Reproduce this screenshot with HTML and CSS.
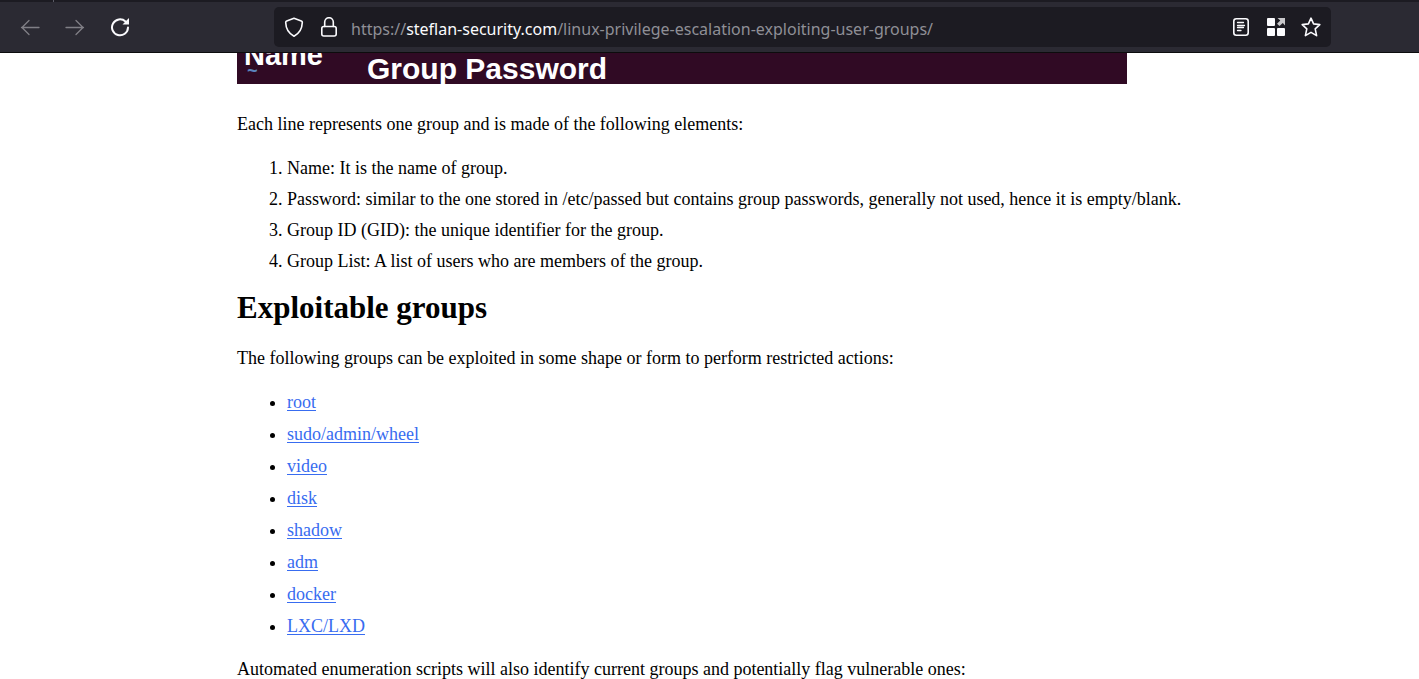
FILE: index.html
```
<!DOCTYPE html>
<html lang="en">
<head>
<meta charset="utf-8">
<title>Linux Privilege Escalation – Exploiting User Groups</title>
<link rel="stylesheet" href="styles.css">
</head>
<body>
<header class="browser">
  <div class="tabstrip"><span class="tab-divider"></span></div>
  <div class="toolbar">
    <nav class="nav-buttons" aria-label="History">
      <button class="icon-button dim" type="button" aria-label="Back">
        <svg viewBox="0 0 20 20"><path d="M19 10.500H1.500M9 3.500L2 10.500L9 17.500"/></svg>
      </button>
      <button class="icon-button dim" type="button" aria-label="Forward">
        <svg viewBox="0 0 20 20"><path d="M1 10.500H18.500M11 3.500L18 10.500L11 17.500"/></svg>
      </button>
      <button class="icon-button" type="button" aria-label="Reload">
        <svg viewBox="0 0 20 20"><path class="bold" d="M15.500 4.500A8 8 0 1 0 18 10.500"/><path class="solid" d="M19 1v6.500h-6.500z"/></svg>
      </button>
    </nav>
    <div class="address">
      <div class="icon-group">
        <button class="icon-button" type="button" aria-label="Tracking protection">
          <svg viewBox="0 0 20 20"><path class="heavy" d="M10 1.200L17.300 4Q18.400 4.400 18.300 5.600C18.100 12 15.500 16.500 10 19.200C4.500 16.500 1.900 12 1.700 5.600Q1.600 4.400 2.700 4Z"/></svg>
        </button>
        <button class="icon-button" type="button" aria-label="Site information">
          <svg viewBox="0 0 20 20"><rect class="heavy" x="2.800" y="9.500" width="14.400" height="9.500" rx="2"/><path class="heavy" d="M5.700 9.500V5a4.300 4.300 0 0 1 8.600 0v4.500"/></svg>
        </button>
      </div>
      <p class="url">https://<span class="host">steflan-security.com</span>/linux-privilege-escalation-exploiting-user-groups/</p>
      <div class="icon-group">
        <button class="icon-button" type="button" aria-label="Reader view">
          <svg viewBox="0 0 20 20"><rect class="heavy" x="2.800" y="1.800" width="14.400" height="16.400" rx="2.500"/><path d="M6.500 5.500h6M6.500 8.500h7M6.500 10.500h6M6.500 13.500h3.500"/></svg>
        </button>
        <button class="icon-button" type="button" aria-label="Extensions">
          <svg viewBox="0 0 20 20"><rect class="solid" x="1" y="1" width="8" height="8" rx="1"/><rect class="solid" x="1" y="11" width="8" height="8" rx="1"/><rect class="solid" x="11" y="11" width="8" height="8" rx="1"/><path class="corner" d="M11.500 1H19v7.500L16.800 6L13.500 9L11 6.800L14.300 3.400z"/></svg>
        </button>
        <button class="icon-button" type="button" aria-label="Bookmark this page">
          <svg viewBox="0 0 20 20"><path class="heavy" d="M10 1.200L12.600 6.900L18.800 7.600L14.200 11.800L15.600 18.600L10 15.400L4.400 18.600L5.800 11.800L1.200 7.600L7.400 6.900Z"/></svg>
        </button>
      </div>
    </div>
  </div>
</header>
<main class="article">
  <div class="banner">
    <span class="label label-name">Name</span>
    <span class="prompt">~</span>
    <span class="label label-password">Group Password</span>
  </div>
  <p>Each line represents one group and is made of the following elements:</p>
  <ol class="elements">
    <li>Name: It is the name of group.</li>
    <li>Password: similar to the one stored in /etc/passed but contains group passwords, generally not used, hence it is empty/blank.</li>
    <li>Group ID (GID): the unique identifier for the group.</li>
    <li>Group List: A list of users who are members of the group.</li>
  </ol>
  <h2>Exploitable groups</h2>
  <p>The following groups can be exploited in some shape or form to perform restricted actions:</p>
  <ul class="groups">
    <li><a href="#root">root</a></li>
    <li><a href="#sudo">sudo/admin/wheel</a></li>
    <li><a href="#video">video</a></li>
    <li><a href="#disk">disk</a></li>
    <li><a href="#shadow">shadow</a></li>
    <li><a href="#adm">adm</a></li>
    <li><a href="#docker">docker</a></li>
    <li><a href="#lxd">LXC/LXD</a></li>
  </ul>
  <p>Automated enumeration scripts will also identify current groups and potentially flag vulnerable ones:</p>
</main>
</body>
</html>
```
FILE: styles.css
```
* {
  box-sizing: border-box;
}

body {
  margin: 0;
  background: #fff;
  color: #000;
  font: 18px/32px "Liberation Serif", "Times New Roman", serif;
}

.tabstrip {
  height: 2px;
  padding-left: 53px;
  background: #1c1b22;
}

.tab-divider {
  display: block;
  width: 1px;
  height: 2px;
  background: #5b5b66;
}

.toolbar {
  display: flex;
  gap: 144px;
  padding: 5px 88px 5px 20px;
  background: #2b2a33;
  border-bottom: 1px solid #0c0c0d;
}

.nav-buttons {
  display: flex;
  align-items: center;
  gap: 25px;
}

.icon-button {
  flex: none;
  width: 20px;
  height: 20px;
  padding: 0;
  border: 0;
  background: none;
  color: #fbfbfe;
}

.icon-button.dim {
  color: #807f86;
}

.icon-button svg {
  display: block;
  width: 20px;
  height: 20px;
  fill: none;
  stroke: currentColor;
  stroke-width: 1.3;
  stroke-linecap: round;
  stroke-linejoin: round;
}

.icon-button .heavy {
  stroke-width: 1.6;
}

.icon-button .bold {
  stroke-width: 2;
}

.icon-button .solid {
  fill: currentColor;
  stroke: none;
}

.icon-button .corner {
  fill: #c8c8cb;
  stroke: none;
}

.address {
  flex: 1;
  display: flex;
  align-items: center;
  gap: 12px;
  min-width: 0;
  height: 40px;
  padding: 0 10px;
  border-radius: 5px;
  background: #1c1b22;
}

.icon-group {
  display: flex;
  gap: 15px;
}

.url {
  flex: 1;
  min-width: 0;
  margin: 0;
  padding-top: 3px;
  overflow: hidden;
  white-space: nowrap;
  color: #8f8f96;
  font: 16px/24px "Noto Sans", "Open Sans", sans-serif;
}

.host {
  color: #fbfbfe;
}

.article {
  max-width: 945px;
  margin: 0 auto;
}

.banner {
  position: relative;
  max-width: 890px;
  height: 31px;
  margin-bottom: 24px;
  overflow: hidden;
  background: #300a24;
  color: #fff;
  font: bold 30px/32px "Liberation Sans", Arial, sans-serif;
}

.label,
.prompt {
  position: absolute;
}

.label-name {
  left: 7px;
  top: -14px;
  font-size: 29px;
}

.label-password {
  left: 130px;
  top: 0;
}

.prompt {
  left: 10px;
  top: 9px;
  color: #5b84bd;
  font: bold 18px/20px "Liberation Mono", monospace;
}

.article p {
  margin: 0 0 12px;
}

h2 {
  margin: 0 0 15px;
  font-size: 31px;
  line-height: 38px;
}

ol,
ul {
  margin: 0;
  padding-left: 50px;
}

.elements {
  padding-top: 1px;
  margin-bottom: 12px;
  line-height: 31px;
}

.groups {
  margin-bottom: 11px;
}

a {
  color: #386cf0;
  text-underline-offset: 2px;
}
```
